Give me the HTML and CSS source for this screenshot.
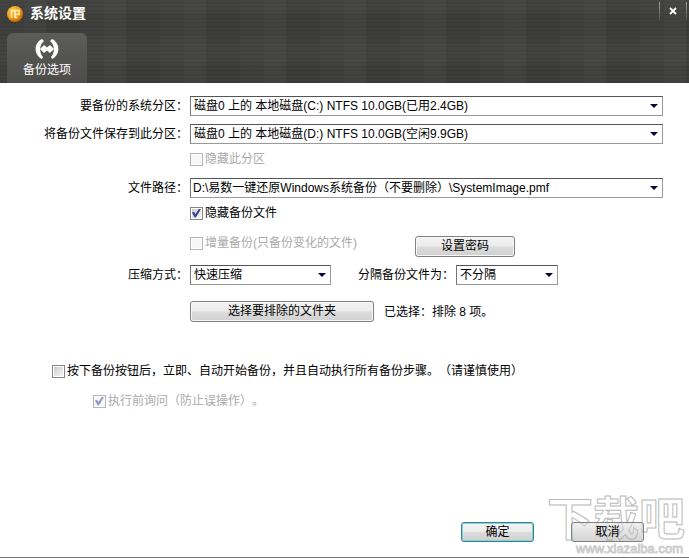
FILE: index.html
```html
<!DOCTYPE html>
<html lang="zh-CN">
<head>
<meta charset="utf-8">
<title>系统设置</title>
<link rel="stylesheet" href="styles.css">
</head>
<body>
<div class="window">
  <header class="header">
    <div class="titlebar">
      <svg class="logo" viewBox="0 0 16 16" aria-hidden="true">
        <defs>
          <radialGradient id="gold" cx="35%" cy="30%" r="75%">
            <stop offset="0" stop-color="#f8c94a"/>
            <stop offset="0.6" stop-color="#ee9a18"/>
            <stop offset="1" stop-color="#c35c08"/>
          </radialGradient>
        </defs>
        <circle cx="8" cy="8" r="8" fill="url(#gold)"/>
        <path d="M4.5 12V4.5M4 4.500h8v4H8M8 5v7M8 11.500h2.500" fill="none" stroke="#fff0b8" stroke-width="1.500"/>
      </svg>
      <h1 class="title">系统设置</h1>
      <button class="close" type="button" aria-label="关闭">
        <svg viewBox="0 0 8 8" aria-hidden="true"><path d="M1 1l6 6M7 1l-6 6" stroke="#fff" stroke-width="1.8"/></svg>
      </button>
    </div>
    <nav class="tabs">
      <button class="tab" type="button">
        <svg class="tab-icon" viewBox="0 0 24 22" aria-hidden="true">
          <path d="M7 1C-1.500 5-1.500 17 7 21l1-2C4 15 4 7 9 3z" fill="#fff"/>
          <path d="M17 1c8.500 4 8.500 16 0 20l-1-2c4-4 4-12-1-16z" fill="#fff"/>
          <path d="M5 11l4-4 3 2.500 3-2.500 4 4-4 4-3-2.500-3 2.500z" fill="#fff"/>
        </svg>
        <span>备份选项</span>
      </button>
    </nav>
  </header>

  <form class="form">
    <div class="row">
      <label class="caption" for="source">要备份的系统分区：</label>
      <span class="combo wide"><select id="source"><option>磁盘0 上的 本地磁盘(C:) NTFS 10.0GB(已用2.4GB)</option></select></span>
    </div>
    <div class="row next">
      <label class="caption" for="target">将备份文件保存到此分区：</label>
      <span class="combo wide"><select id="target"><option>磁盘0 上的 本地磁盘(D:) NTFS 10.0GB(空闲9.9GB)</option></select></span>
    </div>
    <div class="row next">
      <label class="check field off"><input type="checkbox" disabled>隐藏此分区</label>
    </div>
    <div class="row spaced">
      <label class="caption" for="path">文件路径：</label>
      <span class="combo wide path"><select id="path"><option>D:\易数一键还原Windows系统备份（不要删除）\SystemImage.pmf</option></select></span>
    </div>
    <div class="row next">
      <label class="check field"><input type="checkbox" checked>隐藏备份文件</label>
    </div>
    <div class="row apart top">
      <label class="check field off lead"><input type="checkbox" disabled>增量备份(只备份变化的文件)</label>
      <button class="button password" type="button">设置密码</button>
    </div>
    <div class="row next">
      <label class="caption" for="method">压缩方式：</label>
      <span class="combo method"><select id="method"><option>快速压缩</option></select></span>
      <label class="caption split-caption" for="split">分隔备份文件为：</label>
      <span class="combo split"><select id="split"><option>不分隔</option></select></span>
    </div>
    <div class="row apart">
      <button class="button field exclude" type="button">选择要排除的文件夹</button>
      <span class="status">已选择：排除 8 项。</span>
    </div>
    <div class="row section">
      <label class="check auto"><input type="checkbox">按下备份按钮后，立即、自动开始备份，并且自动执行所有备份步骤。（请谨慎使用）</label>
    </div>
    <div class="row apart">
      <label class="check ask off"><input type="checkbox" checked disabled>执行前询问（防止误操作）。</label>
    </div>
  </form>

  <footer class="footer">
    <button class="button small primary" type="button">确定</button>
    <button class="button small cancel" type="button">取消</button>
    <div class="watermark"><span class="mark">下载吧</span><span class="site">www.xiazaiba.com</span></div>
  </footer>
</div>
</body>
</html>
```
FILE: styles.css
```css
* { box-sizing: border-box; }

body {
  margin: 0;
  background: #fff;
  color: #000;
  font: 12px/16px "Liberation Sans", "Noto Sans CJK SC", sans-serif;
  text-spacing-trim: space-all;
}

button, select { font: inherit; color: inherit; }

.window {
  display: flex;
  flex-direction: column;
  min-height: 100vh;
  border-bottom: 1px solid #777;
}

.header {
  display: flex;
  flex-direction: column;
  height: 83px;
  color: #fff;
  background:
    repeating-linear-gradient(0deg, rgba(0, 0, 0, 0.06) 0 1px, transparent 1px 4px),
    repeating-linear-gradient(0deg, rgba(0, 0, 0, 0.08) 0 14px, transparent 22px 38px, rgba(0, 0, 0, 0.08) 52px),
    repeating-linear-gradient(90deg, transparent 0 24px, rgba(255, 255, 255, 0.02) 24px 46px, rgba(0, 0, 0, 0.03) 46px 80px),
    #434341;
}

.titlebar {
  display: flex;
  align-items: flex-start;
  height: 33px;
  padding: 0 2px 0 7px;
}

.logo { width: 16px; height: 16px; margin-top: 6px; }

.title {
  flex: 1;
  margin: 4px 0 0 7px;
  font-size: 14px;
  line-height: 18px;
  font-weight: 700;
}

.close {
  display: flex;
  align-items: center;
  justify-content: center;
  width: 28px;
  height: 18px;
  margin-top: 2px;
  padding: 0;
  background: none;
  border: solid;
  border-width: 0 1px;
  border-image: linear-gradient(#aaa, #4a4a48) 1;
}

.close svg { width: 8px; height: 8px; }

.tabs { display: flex; padding-left: 7px; }

.tab {
  display: flex;
  flex-direction: column;
  align-items: center;
  gap: 2px;
  width: 80px;
  height: 50px;
  padding: 5px 0 0;
  border: 0;
  border-radius: 6px 6px 0 0;
  background: linear-gradient(#5c5c5a, #4c4c4a);
}

.tab-icon { width: 24px; height: 22px; }

.form { flex: 1; padding: 13px 26px 0 0; }

.row { display: flex; align-items: center; }
.top { align-items: flex-start; }
.next { margin-top: 8px; }
.spaced { margin-top: 12px; }
.apart { margin-top: 16px; }
.section { margin-top: 42px; }

.caption { width: 188px; margin-right: 2px; text-align: right; white-space: nowrap; }
.split-caption { width: 123px; }
.field { margin-left: 190px; }
.wide { flex: 1; }
.method { width: 141px; }
.split { width: 102px; }

.combo { display: grid; align-items: center; height: 20px; }

.combo select {
  grid-area: 1 / 1;
  width: 100%;
  height: 20px;
  padding: 0 20px 0 3px;
  appearance: none;
  background: #fff;
  border: 1px solid #999;
  border-top-color: #555;
  border-left-color: #777;
  border-radius: 0;
}

.path select { padding-left: 2px; }

.combo::after {
  content: "";
  grid-area: 1 / 1;
  justify-self: end;
  width: 8px;
  height: 4px;
  margin-right: 5px;
  background: #000634;
  clip-path: polygon(0 0, 100% 0, 50% 100%);
  pointer-events: none;
  z-index: 1;
}

.check { display: flex; align-items: center; height: 14px; gap: 2px; white-space: nowrap; }

.check input {
  display: grid;
  place-items: center;
  width: 13px;
  height: 13px;
  margin: 0;
  appearance: none;
  border: 1px solid #868686;
  background: linear-gradient(135deg, #c8c8c8, #fafafa);
  box-shadow: inset 0 0 0 1px #fff;
}

.check input:checked::after {
  content: "";
  width: 9px;
  height: 9px;
  background: #34478c;
  clip-path: polygon(0 45%, 20% 35%, 38% 60%, 80% 0, 100% 5%, 42% 100%, 30% 100%);
}

.off { color: #aaa; }
.check.off input { border-color: #b5b5b5; background: #f7f7f7; }
.check.off input:checked::after { background: #8d9ac0; }
.lead { width: 225px; }
.auto { margin-left: 52px; }
.ask { margin-left: 93px; }

.button {
  height: 21px;
  padding: 0;
  border: 1px solid #808080;
  border-radius: 3px;
  background: linear-gradient(#f3f3f3, #ececec 48%, #dcdcdc 52%, #d0d0d0);
  box-shadow: inset 0 0 0 1px #f8f8f8;
  line-height: 17px;
}

.password { width: 100px; }
.exclude { width: 184px; }
.status { margin-left: 10px; }

.footer {
  position: relative;
  display: flex;
  justify-content: flex-end;
  gap: 37px;
  padding: 0 45px 15px 0;
}

.small { width: 73px; height: 20px; }
.primary { border-color: #3c7f8e; box-shadow: inset 0 0 0 1px #7fd4e0; }

.cancel {
  z-index: 1;
  background: linear-gradient(rgba(225, 225, 225, 0.5), rgba(150, 150, 150, 0.4));
  box-shadow: none;
}

.watermark {
  position: absolute;
  right: 4px;
  bottom: 1px;
  display: flex;
  flex-direction: column;
  align-items: flex-end;
  color: rgba(255, 255, 255, 0.4);
  pointer-events: none;
}

.mark {
  font-size: 46px;
  line-height: 46px;
  font-weight: 700;
  -webkit-text-stroke: 1px #bbb;
}

.site {
  margin-right: 2px;
  font-size: 13px;
  line-height: 14px;
  -webkit-text-stroke: 1px rgba(170, 170, 170, 0.6);
}
```
